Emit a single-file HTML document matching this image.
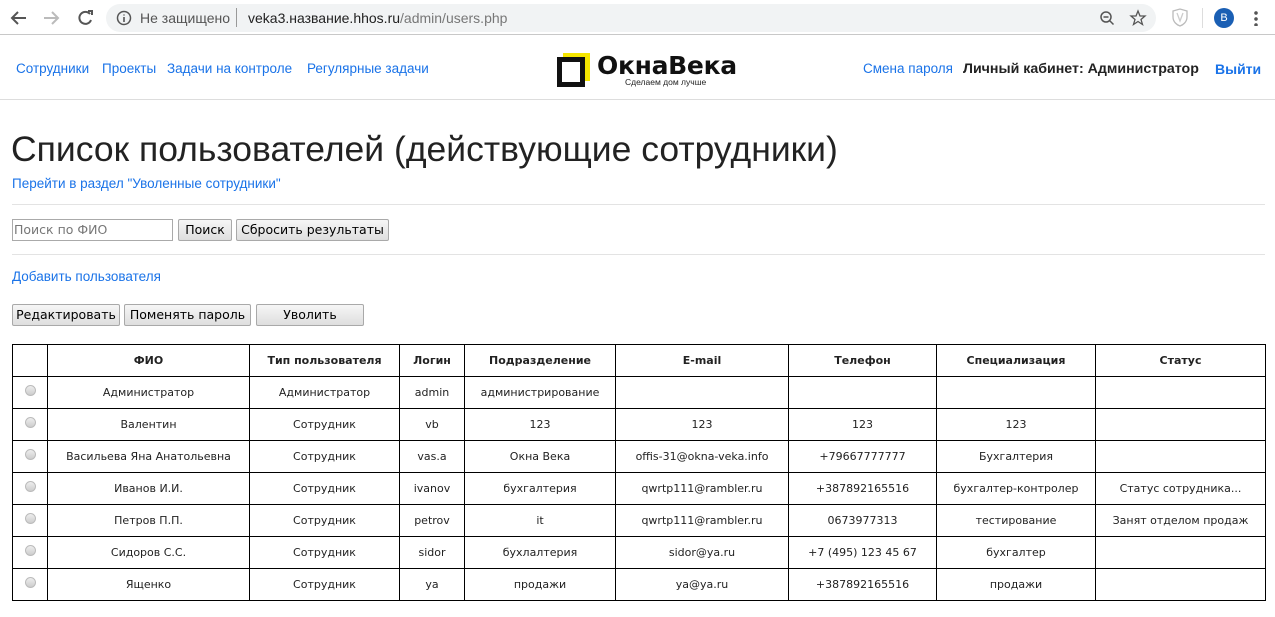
<!DOCTYPE html>
<html><head><meta charset="utf-8"><style>
*{box-sizing:border-box;margin:0;padding:0}
body{width:1275px;height:617px;overflow:hidden;background:#fff;font-family:"Liberation Sans","DejaVu Sans",sans-serif;position:relative}
.a{position:absolute;white-space:nowrap}
.lnk{color:#1a73e8;font-size:13.5px}
.btn{position:absolute;border:1px solid #a9a9a9;background:linear-gradient(#f6f6f6,#dedede);font-family:"DejaVu Sans",sans-serif;font-size:12.5px;color:#000;text-align:center;line-height:20px;border-radius:2px}
table{position:absolute;left:12px;top:344px;border-collapse:collapse;font-family:"DejaVu Sans",sans-serif;font-size:11px;color:#222}
td,th{border:1px solid #000;height:32px;text-align:center;padding:0 4px}
th{font-weight:bold;font-size:11px}
.r{width:11px;height:11px;border-radius:50%;border:1px solid #bbb;background:linear-gradient(#eee,#ccc);display:inline-block;margin-top:-6px;vertical-align:middle}
</style></head><body>
<!-- chrome -->
<div class="a" style="left:0;top:0;width:1275px;height:35px;background:#fff;border-bottom:1px solid #c8c8c8"></div>
<svg class="a" style="left:8px;top:8px" width="90" height="20" viewBox="0 0 90 20">
<path d="M18 10H5M10 4l-6 6 6 6" stroke="#555" stroke-width="2" fill="none"/>
<path d="M36 10h13M44 4l6 6-6 6" stroke="#bbb" stroke-width="2" fill="none"/>
<path d="M82 6a6 6 0 1 0 1 6" stroke="#555" stroke-width="2" fill="none"/><path d="M80 3h4v4" stroke="#555" stroke-width="2" fill="none"/>
</svg>
<div class="a" style="left:106px;top:4px;width:1050px;height:28px;background:#f1f3f4;border-radius:14px"></div>
<svg class="a" style="left:116px;top:10px" width="16" height="16"><circle cx="8" cy="8" r="6.5" stroke="#555" stroke-width="1.5" fill="none"/><path d="M8 7v5M8 4.5v1" stroke="#555" stroke-width="1.6"/></svg>
<div class="a" style="left:140px;top:10px;font-size:14px;color:#555">Не защищено</div>
<div class="a" style="left:236px;top:8px;width:1px;height:19px;background:#999"></div>
<div class="a" style="left:248px;top:10px;font-size:14px;color:#222">veka3.название.hhos.ru<span style="color:#777">/admin/users.php</span></div>
<svg class="a" style="left:1098px;top:9px" width="60" height="18"><circle cx="8" cy="8" r="5" stroke="#555" stroke-width="1.5" fill="none"/><path d="M11.5 11.5l4 4M5.5 8h5" stroke="#555" stroke-width="1.5"/><path d="M40 2l2 5h5l-4 3.5 1.5 5-4.5-3-4.5 3 1.5-5-4-3.5h5z" stroke="#555" stroke-width="1.3" fill="none"/></svg>
<svg class="a" style="left:1171px;top:8px" width="18" height="20"><path d="M2 3l7-2 7 2v6c0 5-4 8-7 9-3-1-7-4-7-9z" stroke="#bbb" stroke-width="1.3" fill="none"/><path d="M6 5l3 8 3-8" stroke="#ccc" stroke-width="1.3" fill="none"/></svg>
<div class="a" style="left:1202px;top:8px;width:1px;height:20px;background:#ddd"></div>
<div class="a" style="left:1214px;top:8px;width:20px;height:20px;border-radius:50%;background:#1a5fb4;color:#fff;font-size:11px;text-align:center;line-height:20px">B</div>
<div class="a" style="left:1254px;top:10px;width:4px;height:16px;background:radial-gradient(circle,#555 1.6px,transparent 2px) 0 0/4px 6px"></div>
<!-- header -->
<div class="a lnk" style="left:16px;top:61px">Сотрудники</div>
<div class="a lnk" style="left:102px;top:61px">Проекты</div>
<div class="a lnk" style="left:167px;top:61px">Задачи на контроле</div>
<div class="a lnk" style="left:307px;top:61px">Регулярные задачи</div>
<div class="a" style="left:563px;top:53px;width:27px;height:28px;background:#f5e600"></div>
<div class="a" style="left:557px;top:57px;width:28px;height:30px;border:5px solid #111;background:#fff"></div>
<div class="a" style="left:597px;top:51px;font-family:'DejaVu Sans',sans-serif;font-size:25px;font-weight:bold;color:#111;letter-spacing:-0.3px">ОкнаВека</div>
<div class="a" style="left:625px;top:77px;font-size:8.5px;color:#222">Сделаем дом лучше</div>
<div class="a lnk" style="left:863px;top:61px">Смена пароля</div>
<div class="a" style="left:963px;top:61px;font-size:14.2px;font-weight:bold;color:#222">Личный кабинет: Администратор</div>
<div class="a" style="left:1215px;top:61px;font-size:14px;font-weight:bold;color:#1a73e8">Выйти</div>
<div class="a" style="left:0;top:99px;width:1275px;height:1px;background:#ddd"></div>
<!-- content -->
<div class="a" style="left:11px;top:129px;font-size:35.5px;color:#222">Список пользователей (действующие сотрудники)</div>
<div class="a lnk" style="left:12px;top:176px">Перейти в раздел "Уволенные сотрудники"</div>
<div class="a" style="left:12px;top:204px;width:1253px;height:1px;background:#e3e3e3"></div>
<div class="a" style="left:12px;top:219px;width:161px;height:22px;border:1px solid #aaa;font-family:'DejaVu Sans',sans-serif;font-size:12.5px;color:#777;line-height:20px;padding-left:1px">Поиск по ФИО</div>
<div class="btn" style="left:178px;top:219px;width:54px;height:22px">Поиск</div>
<div class="btn" style="left:236px;top:219px;width:153px;height:22px">Сбросить результаты</div>
<div class="a" style="left:12px;top:254px;width:1253px;height:1px;background:#e3e3e3"></div>
<div class="a lnk" style="left:12px;top:269px">Добавить пользователя</div>
<div class="btn" style="left:12px;top:304px;width:108px;height:22px">Редактировать</div>
<div class="btn" style="left:124px;top:304px;width:127px;height:22px">Поменять пароль</div>
<div class="btn" style="left:256px;top:304px;width:108px;height:22px">Уволить</div>
<table>
<colgroup><col style="width:35px"><col style="width:202px"><col style="width:150px"><col style="width:65px"><col style="width:151px"><col style="width:173px"><col style="width:148px"><col style="width:159px"><col style="width:170px"></colgroup>
<tr><th></th><th>ФИО</th><th>Тип пользователя</th><th>Логин</th><th>Подразделение</th><th>E-mail</th><th>Телефон</th><th>Специализация</th><th>Статус</th></tr>
<tr><td><span class="r"></span></td><td>Администратор</td><td>Администратор</td><td>admin</td><td>администрирование</td><td></td><td></td><td></td><td></td></tr>
<tr><td><span class="r"></span></td><td>Валентин</td><td>Сотрудник</td><td>vb</td><td>123</td><td>123</td><td>123</td><td>123</td><td></td></tr>
<tr><td><span class="r"></span></td><td>Васильева Яна Анатольевна</td><td>Сотрудник</td><td>vas.a</td><td>Окна Века</td><td>offis-31@okna-veka.info</td><td>+79667777777</td><td>Бухгалтерия</td><td></td></tr>
<tr><td><span class="r"></span></td><td>Иванов И.И.</td><td>Сотрудник</td><td>ivanov</td><td>бухгалтерия</td><td>qwrtp111@rambler.ru</td><td>+387892165516</td><td>бухгалтер-контролер</td><td>Статус сотрудника...</td></tr>
<tr><td><span class="r"></span></td><td>Петров П.П.</td><td>Сотрудник</td><td>petrov</td><td>it</td><td>qwrtp111@rambler.ru</td><td>0673977313</td><td>тестирование</td><td>Занят отделом продаж</td></tr>
<tr><td><span class="r"></span></td><td>Сидоров С.С.</td><td>Сотрудник</td><td>sidor</td><td>бухлалтерия</td><td>sidor@ya.ru</td><td>+7 (495) 123 45 67</td><td>бухгалтер</td><td></td></tr>
<tr><td><span class="r"></span></td><td>Ященко</td><td>Сотрудник</td><td>ya</td><td>продажи</td><td>ya@ya.ru</td><td>+387892165516</td><td>продажи</td><td></td></tr>
</table>
</body></html>
